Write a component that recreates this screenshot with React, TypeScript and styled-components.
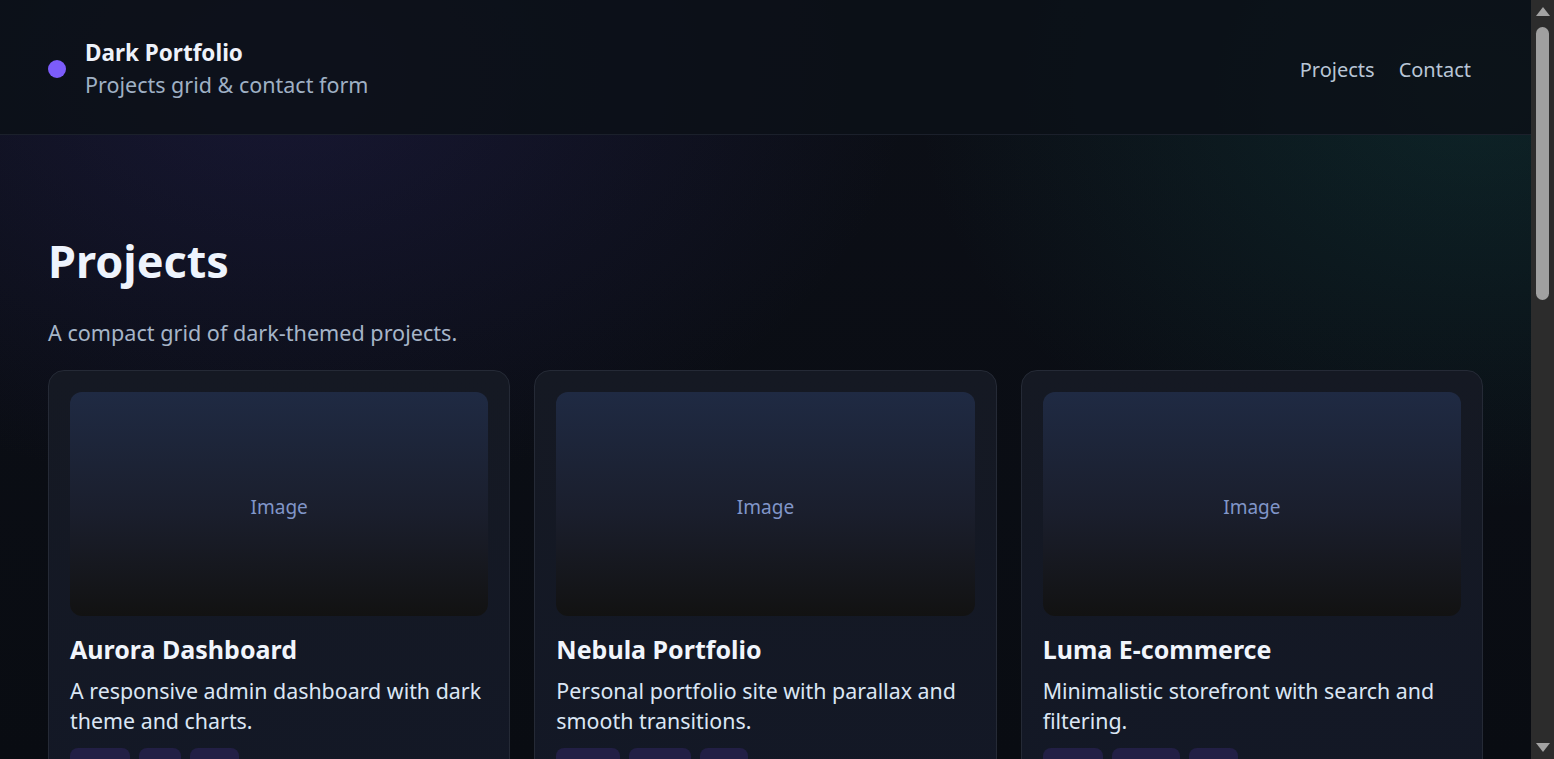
import React from "react";
import styled, { createGlobalStyle } from "styled-components";

const Global = createGlobalStyle`
  html, body { margin: 0; padding: 0; }
  body {
    background-color: #0a0d13;
    background-image:
      radial-gradient(ellipse 900px 600px at 18% 10%, rgba(60, 50, 140, 0.24), transparent 70%),
      radial-gradient(ellipse 800px 600px at 95% 12%, rgba(20, 110, 100, 0.22), transparent 70%),
      linear-gradient(180deg, #0c0f17 0%, #090c12 100%);
    background-attachment: fixed;
    color: #e6edf7;
    font-family: "Noto Sans", "Open Sans", sans-serif;
    min-height: 100vh;
  }
`;

const Shell = styled.div`
  display: flex;
  align-items: flex-start;
`;

const Page = styled.div`
  flex: 1;
  min-width: 0;
`;

const Rail = styled.div`
  position: sticky;
  top: 0;
  flex: none;
  width: 23px;
  height: 100vh;
  background: #2c2c2c;
  display: flex;
  flex-direction: column;
  align-items: center;
  padding: 7px 0;
  box-sizing: border-box;
`;

const Arrow = styled.span<{ $down?: boolean }>`
  width: 0;
  height: 0;
  border-left: 7px solid transparent;
  border-right: 7px solid transparent;
  ${(p) =>
    p.$down
      ? "border-top: 9px solid #a3a3a3;"
      : "border-bottom: 9px solid #a3a3a3;"}
`;

const Track = styled.div`
  flex: 1;
  width: 100%;
  display: flex;
  justify-content: center;
  padding: 11px 0;
`;

const Thumb = styled.div`
  width: 13px;
  height: 273px;
  border-radius: 7px;
  background: #a0a0a0;
`;

const Header = styled.header`
  display: flex;
  align-items: center;
  justify-content: space-between;
  padding: 37px 48px 33px;
  background: rgba(12, 16, 24, 0.85);
  border-bottom: 1px solid #1b202b;
`;

const Brand = styled.div`
  display: flex;
  align-items: center;
  gap: 19px;
`;

const Dot = styled.span`
  width: 18px;
  height: 18px;
  border-radius: 50%;
  background: #7c5cfa;
  flex: none;
`;

const BrandText = styled.div`
  display: flex;
  flex-direction: column;
`;

const BrandTitle = styled.div`
  font-size: 22.5px;
  font-weight: 700;
  line-height: 32px;
  color: #eef2fa;
`;

const BrandSub = styled.div`
  font-size: 21.5px;
  line-height: 32px;
  color: #9fb0c4;
`;

const Nav = styled.nav`
  display: flex;
  padding-top: 2px;
`;

const NavLink = styled.a`
  font-size: 20px;
  line-height: 32px;
  color: #b9c6d6;
  padding: 0 12px;
  text-decoration: none;
`;

const Main = styled.main`
  padding: 97px 48px 48px;
`;

const H1 = styled.h1`
  margin: 0;
  font-size: 45px;
  line-height: 58px;
  font-weight: 700;
  color: #eef4fd;
`;

const Lead = styled.p`
  margin: 28px 0 22px;
  font-size: 21.6px;
  line-height: 30px;
  color: #a6b5c8;
`;

const Grid = styled.div`
  display: grid;
  grid-template-columns: repeat(3, 1fr);
  gap: 24px;
`;

const Card = styled.article`
  background: linear-gradient(180deg, #151923 0%, #131826 100%);
  border: 1px solid #252a36;
  border-radius: 16px;
  padding: 21px;
`;

const Picture = styled.div`
  height: 224px;
  box-sizing: border-box;
  padding-top: 5px;
  border-radius: 12px;
  background: linear-gradient(180deg, #1f2a43 0%, #1a1e2c 55%, #121212 100%);
  display: flex;
  align-items: center;
  justify-content: center;
  font-size: 19px;
  color: #8196c9;
`;

const CardTitle = styled.h2`
  margin: 17px 0 0;
  font-size: 25px;
  line-height: 32px;
  font-weight: 700;
  color: #f1f5fc;
`;

const CardDesc = styled.p`
  margin: 11px 0 0;
  font-size: 21.4px;
  line-height: 30px;
  color: #dbe6f4;
`;

const Tags = styled.div`
  display: flex;
  gap: 9px;
  margin-top: 12px;
`;

const Tag = styled.span`
  background: #221f45;
  color: #c4b8ff;
  border-radius: 8px;
  font-size: 14px;
  line-height: 20px;
  padding: 12px 12px 8px;
`;

const projects = [
  {
    title: "Aurora Dashboard",
    desc: "A responsive admin dashboard with dark theme and charts.",
    tags: ["React", "D3", "CSS"],
  },
  {
    title: "Nebula Portfolio",
    desc: "Personal portfolio site with parallax and smooth transitions.",
    tags: ["Nuxt3", "Three", "CSS"],
  },
  {
    title: "Luma E-commerce",
    desc: "Minimalistic storefront with search and filtering.",
    tags: ["React", "Search", "Vue"],
  },
];

export default function App() {
  return (
    <>
      <Global />
      <Shell>
        <Page>
          <Header>
            <Brand>
              <Dot />
              <BrandText>
                <BrandTitle>Dark Portfolio</BrandTitle>
                <BrandSub>Projects grid &amp; contact form</BrandSub>
              </BrandText>
            </Brand>
            <Nav>
              <NavLink href="#projects">Projects</NavLink>
              <NavLink href="#contact">Contact</NavLink>
            </Nav>
          </Header>
          <Main>
            <H1 id="projects">Projects</H1>
            <Lead>A compact grid of dark-themed projects.</Lead>
            <Grid>
              {projects.map((p) => (
                <Card key={p.title}>
                  <Picture>Image</Picture>
                  <CardTitle>{p.title}</CardTitle>
                  <CardDesc>{p.desc}</CardDesc>
                  <Tags>
                    {p.tags.map((t) => (
                      <Tag key={t}>{t}</Tag>
                    ))}
                  </Tags>
                </Card>
              ))}
            </Grid>
          </Main>
        </Page>
        <Rail aria-hidden="true">
          <Arrow />
          <Track>
            <Thumb />
          </Track>
          <Arrow $down />
        </Rail>
      </Shell>
    </>
  );
}
